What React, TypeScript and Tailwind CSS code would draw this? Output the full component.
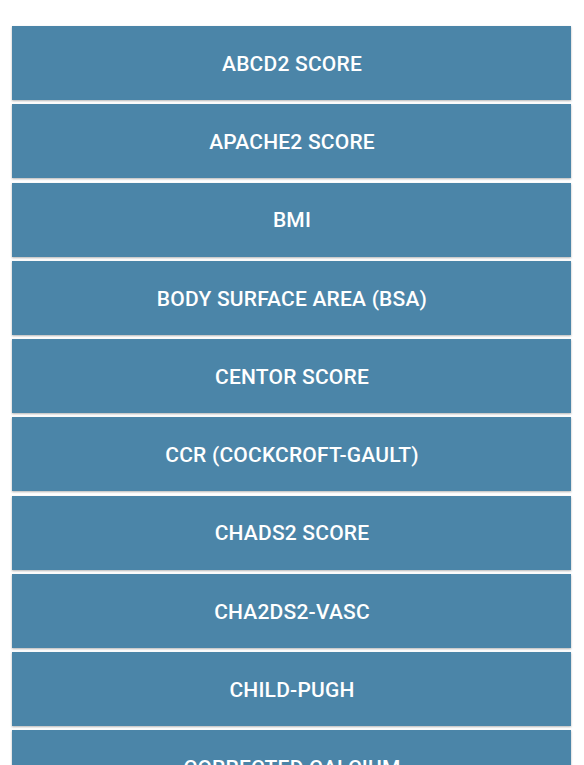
import React from "react";

const calculators = [
  "ABCD2 SCORE",
  "APACHE2 SCORE",
  "BMI",
  "BODY SURFACE AREA (BSA)",
  "CENTOR SCORE",
  "CCR (COCKCROFT-GAULT)",
  "CHADS2 SCORE",
  "CHA2DS2-VASC",
  "CHILD-PUGH",
  "CORRECTED CALCIUM",
  "CREATININE CLEARANCE",
];

const App = () => {
  return (
    <main className="min-h-screen bg-white font-['Roboto',sans-serif]">
      {/* Calculator list */}
      <div className="flex flex-col gap-[4.25px] pt-[26px] pl-[12px] pr-[13px]">
        {calculators.map((name) => (
          <button
            key={name}
            className="h-[74px] w-full shrink-0 bg-[#4b85a8] pt-[3px] pl-[1px] text-white text-[21px] font-medium tracking-[0.2px] shadow-[0_1px_2px_rgba(0,0,0,0.3)]"
          >
            {name}
          </button>
        ))}
      </div>
    </main>
  );
};

export default App;
